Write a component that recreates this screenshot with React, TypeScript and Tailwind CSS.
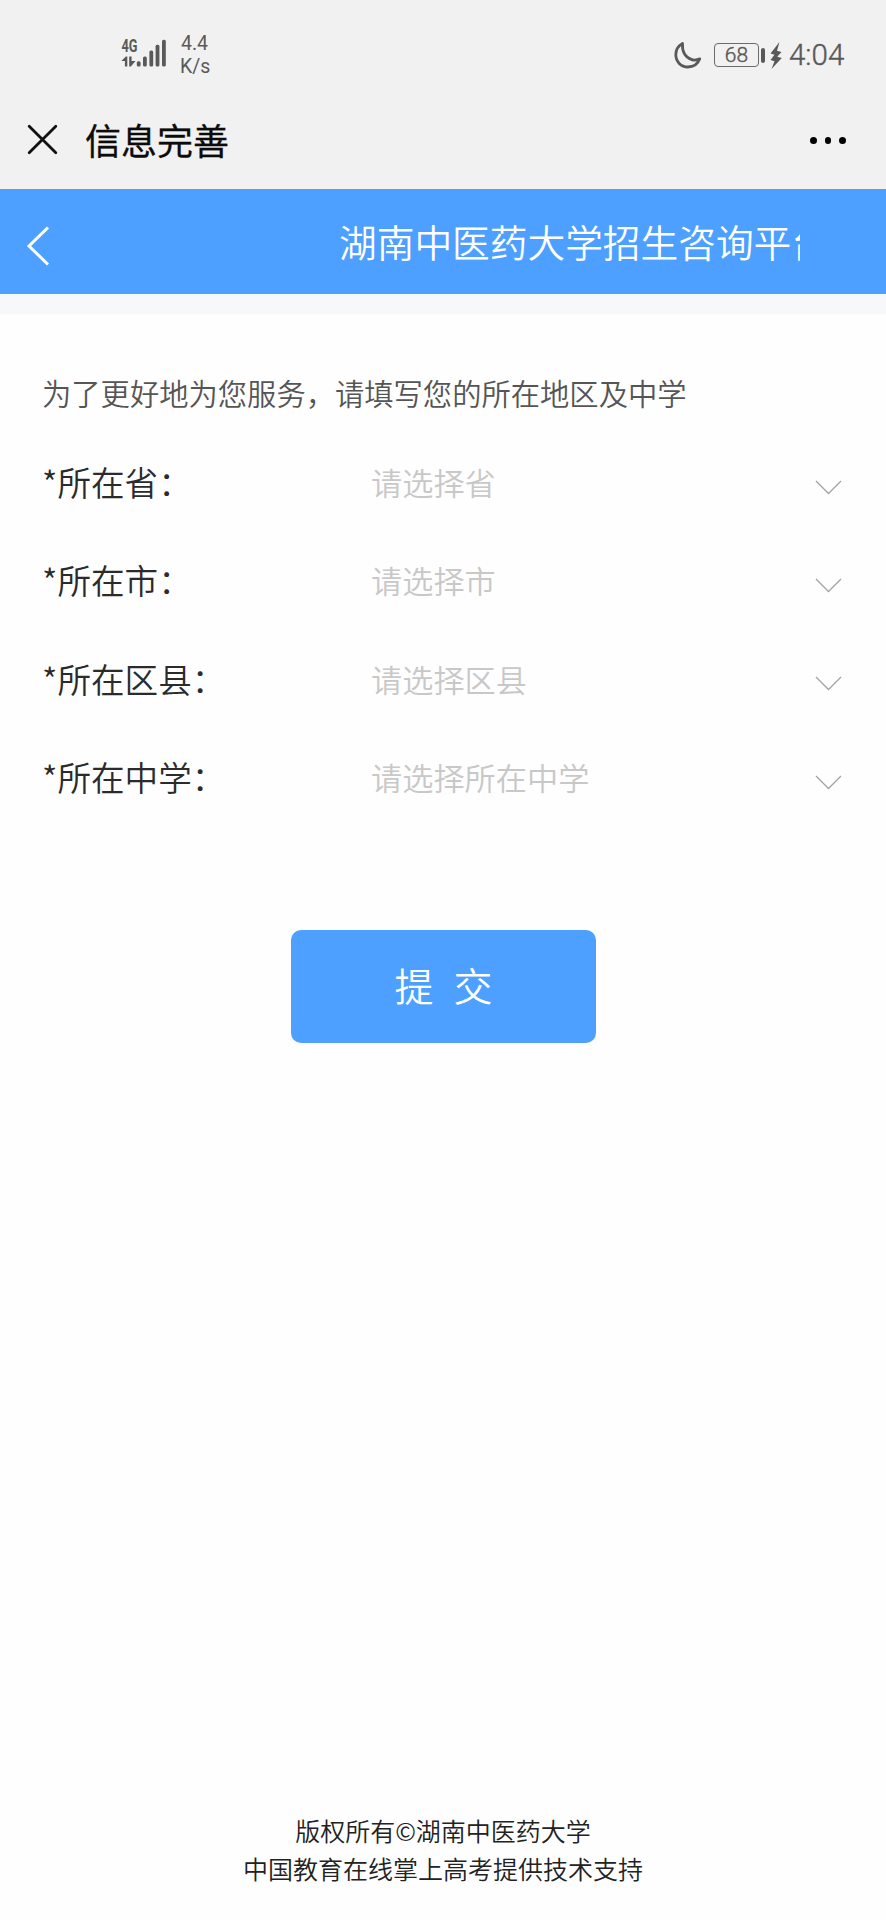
import React from "react";

const fields = [
  { label: "*所在省：", placeholder: "请选择省" },
  { label: "*所在市：", placeholder: "请选择市" },
  { label: "*所在区县：", placeholder: "请选择区县" },
  { label: "*所在中学：", placeholder: "请选择所在中学" },
];

function SignalIcon() {
  return (
    <svg className="block" width="46" height="36" viewBox="0 -6 46 36" fill="#595959">
      <text x="0.5" y="13.2" fontFamily="Roboto, sans-serif" fontWeight="700" fontSize="17.5" textLength="16" lengthAdjust="spacingAndGlyphs">4G</text>
      <path d="M6.3 17.5v10H3.9V22H0.4L4.8 17.5ZM8.2 17.5h2.4V22h3.9l-4.6 5.5H8.2Z" />
      <rect x="15.8" y="22.3" width="3.8" height="5.2" rx="1.5" />
      <rect x="22" y="17.5" width="3.8" height="10" rx="1.5" />
      <rect x="28.4" y="11.5" width="3.8" height="16" rx="1.5" />
      <rect x="34.6" y="5.8" width="3.8" height="21.7" rx="1.5" />
      <rect x="41" y="0.8" width="3.8" height="26.7" rx="1.5" />
    </svg>
  );
}

function MoonIcon() {
  return (
    <svg className="block" width="28" height="29" viewBox="0 0 28 29" fill="none" stroke="#595959" strokeWidth="2.8" strokeLinejoin="round">
      <path d="M8.5 2.4C4.5 4.8 1.8 9 1.8 13.6c0 7 5.2 12.4 12 12.4 5.6 0 10-2.9 12-8.2-2.8 1.3-5.6 1.6-8 .8C11.5 16.8 7.7 10.5 8.500 2.400Z" />
    </svg>
  );
}

function StatusBar() {
  return (
    <div className="flex h-[100px] items-start justify-between pr-[41px] pl-[121px] text-[#595959]">
      <div className="flex">
        <div className="pt-[33px]">
          <SignalIcon />
        </div>
        <div className="ml-[13px] pt-[32px] font-[Roboto,sans-serif] text-[19.5px] leading-[23px]">
          <div className="pl-[1px]">4.4</div>
          <div>K/s</div>
        </div>
      </div>
      <div className="flex items-center pt-[36px] font-[Roboto,sans-serif]">
        <MoonIcon />
        <div className="ml-[12px] flex h-[24px] w-[45px] items-center justify-center rounded-[4px] border-[1.5px] border-[#6b6b6b] text-[21px] leading-none font-[350] [-webkit-text-stroke:0.4px_#595959]">68</div>
        <div className="ml-[2px] h-[15px] w-[4px] rounded-[2px] bg-[#595959]" />
        <svg className="ml-[5px] block" width="12" height="27" viewBox="0 0 12 27" fill="#595959">
          <path d="M9.5 0 0.5 11.5l4 1.2L0.5 18l4 1.2L1.5 27 11.8 16l-4.6-1.2L11.5 10 7 8.7Z" />
        </svg>
        <div className="ml-[7px] w-[56px] text-[29.5px] leading-[38px] font-[350] [-webkit-text-stroke:0.4px_#595959]">4:04</div>
      </div>
    </div>
  );
}

function TitleBar() {
  return (
    <div className="flex h-[89px] items-start pt-[20px] pr-[40px] pl-[27px]">
      <svg className="mt-[4px] block" width="31" height="31" viewBox="0 0 31 31" stroke="#111" strokeWidth="2.8" strokeLinecap="round">
        <path d="m2.2 2.2 26.6 26.6M28.8 2.2 2.2 28.8" />
      </svg>
      <h1 className="-mt-[2px] ml-[27px] text-[36px] leading-[42px] font-normal text-[#0c0c0c] [-webkit-text-stroke:0.3px_#0c0c0c]">信息完善</h1>
      <div className="mt-[17px] ml-auto flex gap-[8px]">
        <span className="size-[6.7px] rounded-full bg-black" />
        <span className="size-[6.7px] rounded-full bg-black" />
        <span className="size-[6.7px] rounded-full bg-black" />
      </div>
    </div>
  );
}

export default function App() {
  return (
    <div className="flex h-[1920px] w-[886px] flex-col bg-[#fefefe] font-['Noto_Sans_CJK_SC',sans-serif]">
      <div className="bg-[#f1f1f1]">
        <StatusBar />
        <TitleBar />
      </div>

      <header className="flex h-[105px] items-start bg-[#4da0ff] pl-[26px] text-white">
        <svg className="mt-[37px] block" width="24" height="40" viewBox="0 0 24 40" fill="none" stroke="currentColor" strokeWidth="3">
          <path d="M22 1.5 3 20l19 18.5" />
        </svg>
        <div className="mt-[24px] ml-[289px] w-[461px] overflow-hidden text-[37.7px] leading-[56px] font-[350] whitespace-nowrap">湖南中医药大学招生咨询平台</div>
      </header>
      <div className="h-[20px] bg-[#f7f8f9]" />

      <main className="flex flex-1 flex-col font-[350]">
        <p className="mt-[58px] pl-[42px] text-[29.3px] leading-[40px] text-[#555]">为了更好地为您服务，请填写您的所在地区及中学</p>
        <form className="mt-[21px] flex flex-col">
          {fields.map((field) => (
            <div key={field.label} className="flex h-[98.3px] items-center pr-[44px] pl-[42px]">
              <label className="w-[329px] text-[33.6px] leading-[50px] text-[#2b2b2b]">{field.label}</label>
              <span className="text-[31.2px] leading-[50px] text-[#c8c8c8]">{field.placeholder}</span>
              <svg className="mt-[10px] ml-auto block" width="27" height="15" viewBox="0 0 27 15" fill="none" stroke="#a3a3a3" strokeWidth="1.3">
                <path d="m1 1 12.5 12.5L26 1" />
              </svg>
            </div>
          ))}
          <button type="button" className="mt-[104px] ml-[291px] flex h-[113px] w-[305px] items-center justify-center gap-[20px] rounded-[10px] bg-[#4da0ff] pb-[5px] text-[39px] text-white">
            <span>提</span>
            <span>交</span>
          </button>
        </form>
        <footer className="mt-auto mb-[33px] text-center text-[25px] leading-[38px] text-[#222]">
          <p>版权所有©湖南中医药大学</p>
          <p>中国教育在线掌上高考提供技术支持</p>
        </footer>
      </main>
    </div>
  );
}
